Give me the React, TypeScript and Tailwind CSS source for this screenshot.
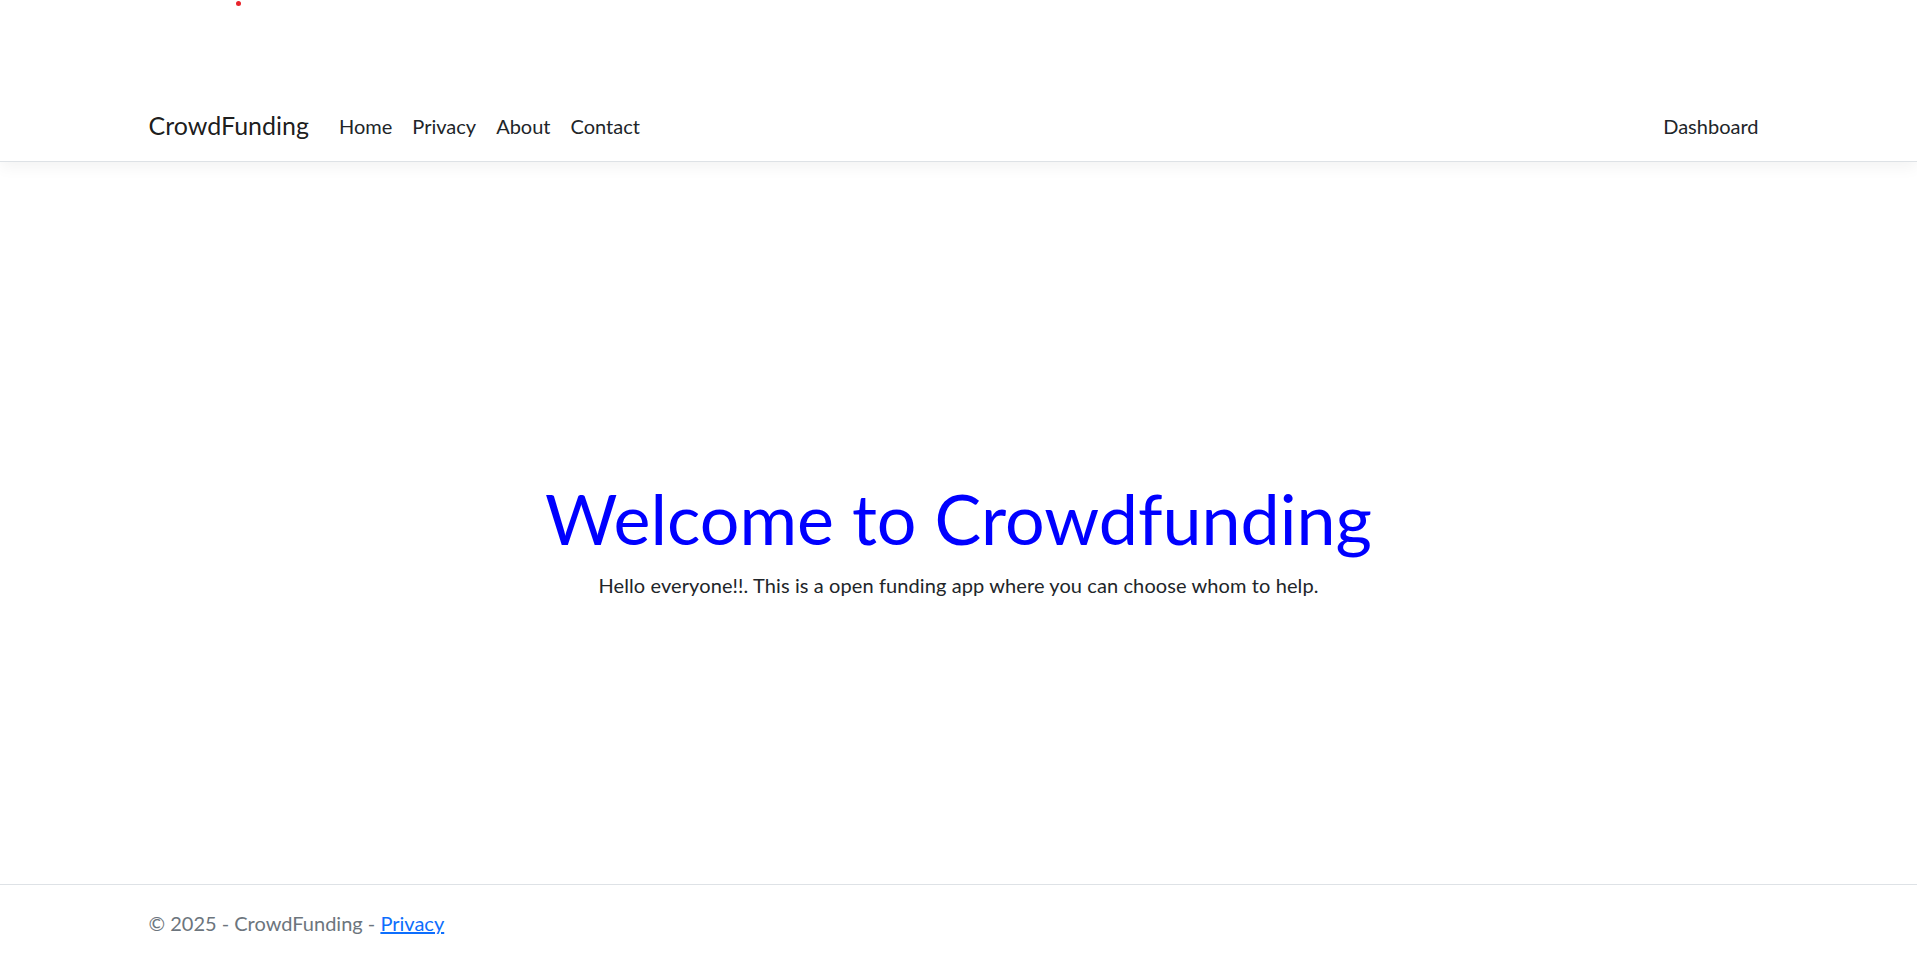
const navLinks = ['Home', 'Privacy', 'About', 'Contact'];

export default function App() {
  return (
    <div className="flex h-[955px] flex-col bg-white font-[family-name:Lato,sans-serif] text-[#212529]">
      {/* stray marker above the header */}
      <div className="relative z-10 h-[91px] bg-white pl-[236px] pt-[1px]">
        <span className="block h-[5px] w-[5px] rounded-full bg-[#e8232b]" />
      </div>

      <header className="border-b border-[#dee2e6] bg-white shadow-[0_5px_15px_rgba(0,0,0,0.05)]">
        <nav className="flex h-[70px] items-center px-[148.5px]">
          <a href="#" className="mr-[20px] py-[6.25px] text-[25px] leading-[37.5px] text-black/90">
            CrowdFunding
          </a>
          <ul className="flex flex-1 items-center">
            {navLinks.map((link) => (
              <li key={link}>
                <a href="#" className="block px-[10px] py-[10px] text-[20px] leading-[30px] text-[#212529]">
                  {link}
                </a>
              </li>
            ))}
          </ul>
          <ul className="flex items-center">
            <li>
              <a href="#" className="block px-[10px] py-[10px] text-[20px] leading-[30px] text-[#212529]">
                Dashboard
              </a>
            </li>
          </ul>
        </nav>
      </header>

      <main className="flex-1 px-[148.5px] pt-[314px] text-center">
        <h1 className="mb-[10px] text-[70px] leading-[84px] font-normal text-[#0000ff]">
          Welcome to Crowdfunding
        </h1>
        <p className="text-[20px] leading-[30px] tracking-[0.1px]">
          Hello everyone!!. This is a open funding app where you can choose whom to help.
        </p>
      </main>

      <footer className="h-[71px] border-t border-[#dee2e6] px-[148.5px] pt-[23px] text-[20px] leading-[30px] text-[#6c757d]">
        © 2025 - CrowdFunding -{' '}
        <a href="#" className="text-[#0d6efd] underline">
          Privacy
        </a>
      </footer>
    </div>
  );
}
